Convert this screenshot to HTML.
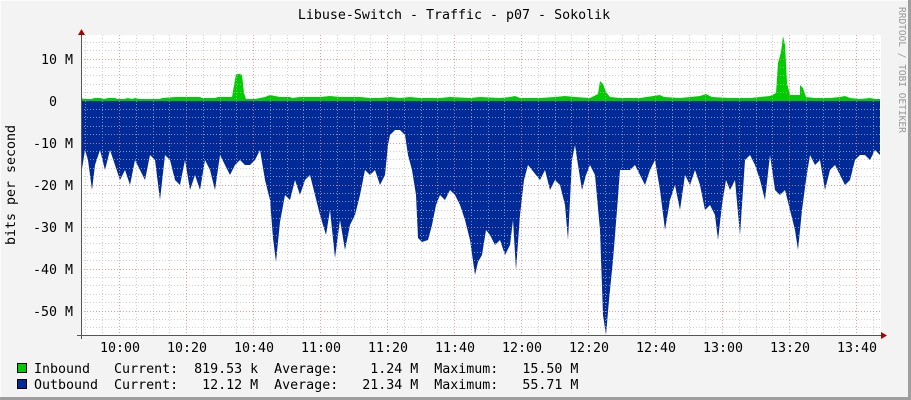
<!DOCTYPE html>
<html><head><style>
html,body{margin:0;padding:0;background:#f3f3f3;}
svg{display:block;}
text{font-family:"DejaVu Sans Mono","Liberation Mono",monospace;font-size:13.3px;fill:#000;}
</style></head><body>
<svg width="911" height="400" xmlns="http://www.w3.org/2000/svg">
<rect x="0" y="0" width="911" height="400" fill="#f3f3f3"/>
<line x1="0" y1="0.5" x2="911" y2="0.5" stroke="#fcfcfc"/>
<line x1="0.5" y1="0" x2="0.5" y2="400" stroke="#fcfcfc"/>
<line x1="0" y1="398.5" x2="911" y2="398.5" stroke="#9e9e9e" stroke-width="3"/>
<line x1="909.5" y1="0" x2="909.5" y2="400" stroke="#9e9e9e" stroke-width="3"/>
<rect x="81" y="35" width="800" height="300" fill="#fff"/>
<polygon fill="#002a97" points="81,101 81,175 85,150 88,160 92,190 95,165 100,150 105,170 110,150 115,165 120,180 125,170 130,185 135,160 140,170 145,180 150,155 155,160 160,200 165,155 170,160 175,180 180,185 185,160 190,190 195,175 200,190 205,160 210,170 215,190 220,155 225,165 230,175 235,165 240,160 245,165 250,165 255,160 260,150 265,180 270,200 273,238 276,262 280,222 285,195 290,200 295,180 300,195 305,180 310,175 315,195 320,215 323,225 326,235 330,210 335,258 340,220 345,250 350,225 355,215 360,195 365,170 370,175 375,170 380,185 385,175 388,145 390,135 395,130 400,130 405,135 408,155 412,170 416,195 418,238 422,242 428,240 432,225 436,205 440,195 445,200 450,190 455,195 460,205 465,220 470,240 475,275 478,262 482,255 486,230 490,235 495,245 500,240 505,255 510,245 513,220 516,270 520,215 524,180 528,165 532,170 536,175 540,180 545,170 550,190 555,180 560,185 565,205 568,240 572,160 575,145 578,165 582,190 586,175 590,165 595,175 600,230 603,315 606,335 609,300 613,260 617,210 620,170 625,170 630,170 635,165 640,175 645,185 650,170 655,160 660,190 665,230 670,200 675,185 680,210 685,175 690,185 695,170 700,185 705,210 710,205 715,215 718,240 722,205 726,180 730,190 735,180 740,235 745,160 750,155 755,165 760,180 765,200 770,155 775,190 780,195 785,190 790,210 795,230 798,250 802,210 806,180 810,155 815,165 820,160 825,190 830,170 835,165 840,175 845,185 850,180 855,160 860,155 865,155 870,160 875,150 880,155 880,101"/>
<polygon fill="#00cc00" points="81,101 81,98 84,99 92,99 94,98 100,98 104,99 108,98 115,98 118,99 124,99 128,98 132,99 135,98 140,99 160,99 162,98 176,97 200,97 202,98 215,98 218,97 232,97 236,74 240,74 242,75 244,93 246,99 255,99 265,97 270,95 275,96 280,97 290,97 292,98 300,97 320,97 330,96 340,97 360,97 370,98 380,98 390,97 400,98 410,97 420,98 440,98 450,97 470,98 480,97 500,98 510,97 515,96 520,98 540,98 555,97 565,96 575,97 590,98 598,94 600,81 603,84 606,92 610,97 620,98 640,98 660,95 664,97 680,98 700,96 706,94 712,97 730,98 750,98 760,97 770,96 776,93 778,63 781,52 783,36 785,45 787,83 790,95 800,95 800,85 803,88 806,97 815,98 830,98 840,97 845,96 850,98 860,99 870,98 875,99 880,99 880,101"/>
<g stroke="#bbb" stroke-width="1" stroke-dasharray="1,2" opacity="0.7">
<path d="M81 42.5H881M81 50.5H881M81 67.5H881M81 75.5H881M81 84.5H881M81 92.5H881M81 109.5H881M81 117.5H881M81 126.5H881M81 134.5H881M81 151.5H881M81 159.5H881M81 168.5H881M81 176.5H881M81 193.5H881M81 201.5H881M81 210.5H881M81 218.5H881M81 235.5H881M81 243.5H881M81 252.5H881M81 260.5H881M81 277.5H881M81 285.5H881M81 294.5H881M81 302.5H881M81 319.5H881M81 327.5H881"/>
<path d="M85.5 35V335M102.5 35V335M136.5 35V335M153.5 35V335M169.5 35V335M203.5 35V335M220.5 35V335M236.5 35V335M270.5 35V335M287.5 35V335M303.5 35V335M337.5 35V335M354.5 35V335M370.5 35V335M404.5 35V335M421.5 35V335M437.5 35V335M471.5 35V335M488.5 35V335M504.5 35V335M538.5 35V335M555.5 35V335M571.5 35V335M605.5 35V335M622.5 35V335M638.5 35V335M672.5 35V335M689.5 35V335M705.5 35V335M739.5 35V335M756.5 35V335M772.5 35V335M806.5 35V335M823.5 35V335M839.5 35V335M873.5 35V335"/>
</g>
<g stroke="#f08080" stroke-width="1" stroke-dasharray="1,2" opacity="0.8">
<path d="M81 59.5H881M81 143.5H881M81 185.5H881M81 227.5H881M81 269.5H881M81 311.5H881"/>
<path d="M119.5 35V335M186.5 35V335M253.5 35V335M320.5 35V335M387.5 35V335M454.5 35V335M521.5 35V335M588.5 35V335M655.5 35V335M722.5 35V335M789.5 35V335M856.5 35V335"/>
</g>
<line x1="81.5" y1="33" x2="81.5" y2="339" stroke="#555"/>
<line x1="77" y1="335.5" x2="884" y2="335.5" stroke="#555"/>
<polygon points="78,35 85,35 81.5,29" fill="#a00"/>
<polygon points="881,332 881,339 887,335.5" fill="#a00"/>
<text x="454" y="19" text-anchor="middle">Libuse-Switch - Traffic - p07 - Sokolik</text>
<g text-anchor="end">
<text x="73" y="64">10 M</text>
<text x="57" y="106">0</text>
<text x="73" y="148">-10 M</text>
<text x="73" y="190">-20 M</text>
<text x="73" y="232">-30 M</text>
<text x="73" y="274">-40 M</text>
<text x="73" y="316">-50 M</text>
</g>
<text transform="translate(15,185) rotate(-90)" text-anchor="middle">bits per second</text>
<g text-anchor="middle">
<text x="120" y="352">10:00</text><text x="187" y="352">10:20</text><text x="254" y="352">10:40</text><text x="321" y="352">11:00</text><text x="388" y="352">11:20</text><text x="455" y="352">11:40</text><text x="522" y="352">12:00</text><text x="589" y="352">12:20</text><text x="656" y="352">12:40</text><text x="723" y="352">13:00</text><text x="790" y="352">13:20</text><text x="857" y="352">13:40</text>
</g>
<rect x="17.5" y="363.5" width="9" height="9" fill="#00cc00" stroke="#000"/>
<rect x="17.5" y="379.5" width="9" height="9" fill="#002a97" stroke="#000"/>
<text x="34" y="373" xml:space="preserve">Inbound   Current:  819.53 k  Average:    1.24 M  Maximum:   15.50 M</text>
<text x="34" y="389" xml:space="preserve">Outbound  Current:   12.12 M  Average:   21.34 M  Maximum:   55.71 M</text>
<text transform="translate(899,7) rotate(90)" style="font-size:9.5px;fill:#999">RRDTOOL / TOBI OETIKER</text>
</svg>
</body></html>
